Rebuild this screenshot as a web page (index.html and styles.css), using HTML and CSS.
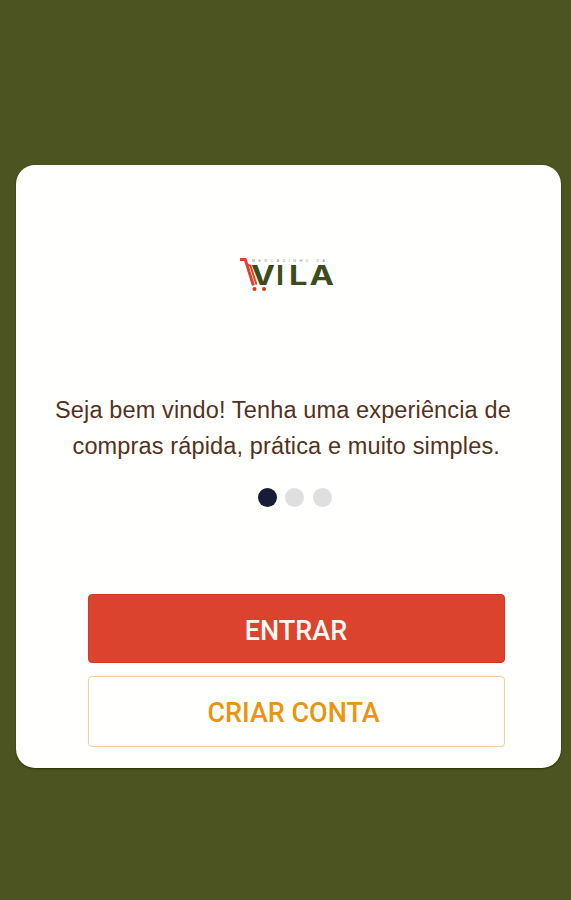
FILE: index.html
```html
<!DOCTYPE html>
<html lang="pt-BR">
<head>
<meta charset="utf-8">
<title>Mercadinho da Vila</title>
<link rel="stylesheet" href="styles.css">
</head>
<body>
<main class="card">
  <svg class="logo" viewBox="0 0 98 40" role="img" aria-label="Mercadinho da Vila">
    <text class="tagline" x="14" y="8.2" textLength="73">MERCADINHO DA</text>
    <g class="wordmark">
      <text x="13" y="30.6" textLength="24" lengthAdjust="spacingAndGlyphs">V</text>
      <text x="38.2" y="30.6">I</text>
      <text x="51" y="30.6" textLength="18.5" lengthAdjust="spacingAndGlyphs">L</text>
      <text x="71.5" y="30.6" textLength="24.5" lengthAdjust="spacingAndGlyphs">A</text>
    </g>
    <path class="gap" d="M10 12L17.5 32"/>
    <path class="cart" d="M2 5.4H7.2L15.4 31.5"/>
    <path class="cart inner" d="M9 10.3L12.4 11.8L18.4 30.5"/>
    <circle class="wheel" cx="16.5" cy="35" r="2"/>
    <circle class="wheel" cx="26" cy="35" r="2"/>
  </svg>
  <p class="welcome"><span class="line first">Seja bem vindo! Tenha uma experiência de</span><span class="line second">compras rápida, prática e muito simples.</span></p>
  <div class="dots"><span class="dot active"></span><span class="dot"></span><span class="dot"></span></div>
  <div class="actions">
    <button class="btn primary" type="button">ENTRAR</button>
    <button class="btn outline" type="button">CRIAR CONTA</button>
  </div>
</main>
</body>
</html>
```
FILE: styles.css
```css
* { box-sizing: border-box; }
body {
  margin: 0;
  min-height: 900px;
  padding: 165px 10px 0 16px;
  background: #4c5521;
  font-family: "Liberation Sans", Arial, sans-serif;
}
.card {
  height: 603px;
  padding: 89px 0 0;
  border-radius: 19px;
  background: #fffffe;
  box-shadow: 0 1px 2px #263006;
  display: flex;
  flex-direction: column;
}
.logo { width: 98px; height: 40px; margin-left: 222px; }
.tagline { font: 3.6px "Liberation Sans", sans-serif; fill: #8d917c; }
.wordmark { font: 700 27px Inter, sans-serif; fill: #3e4c1c; }
.gap { fill: none; stroke: #fffffe; stroke-width: 2; }
.cart { fill: none; stroke: #dc432d; stroke-width: 3; }
.cart.inner { stroke-width: 2; }
.wheel { fill: #dc321f; }
.welcome {
  margin: 98px 0 0;
  color: #543222;
  font-size: 23.5px;
  line-height: 36px;
  white-space: nowrap;
}
.line { display: block; }
.first { margin-left: 39px; letter-spacing: 0.14px; }
.second { margin-left: 56.5px; letter-spacing: 0.14px; }
.dots { display: flex; gap: 8.5px; margin: 24px 0 0 241.5px; }
.dot { width: 19px; height: 19px; border-radius: 50%; background: #e0dfe0; }
.dot.active { background: #171d36; }
.actions {
  display: flex;
  flex-direction: column;
  gap: 13px;
  width: 417px;
  margin: 87px 0 0 72px;
}
.btn {
  height: 69px;
  padding: 4px 1px 0 0;
  border: 1px solid #d23a22;
  border-radius: 4px;
  font: 500 27px Roboto, sans-serif;
}
.primary { background: #dc432e; color: #fff8f3; }
.outline {
  height: 71px;
  padding: 3px 6px 0 0;
  background: #fffffe;
  border-color: #efcf9c;
  color: #ea940f;
}
```
